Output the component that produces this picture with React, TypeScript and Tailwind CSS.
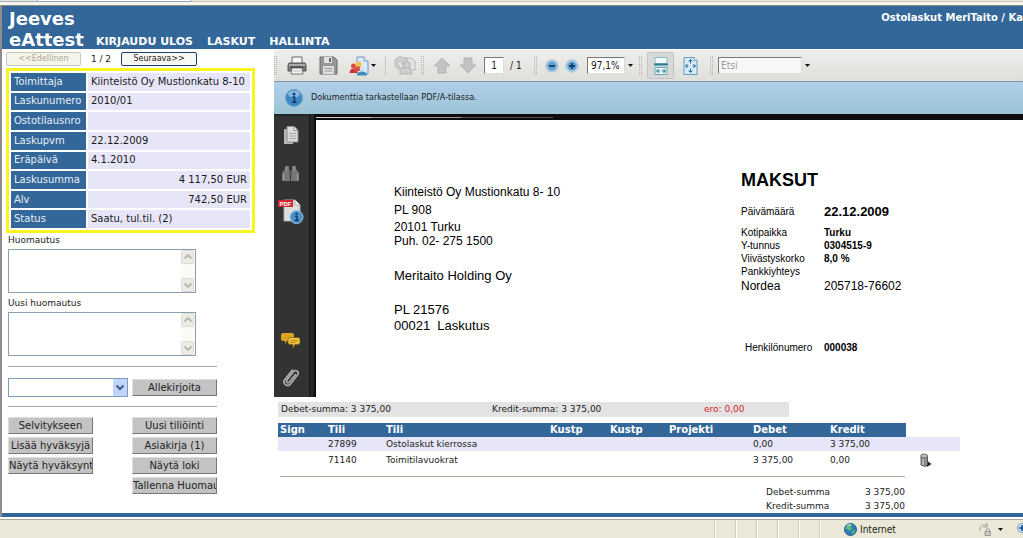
import type { ReactNode } from 'react'

interface InfoRow {
  label: string
  value: string
  right?: boolean
}

interface Posting {
  account: string
  name: string
  debet: string
  kredit: string
}

const info: InfoRow[] = [
  { label: 'Toimittaja', value: 'Kiinteistö Oy Mustionkatu 8-10' },
  { label: 'Laskunumero', value: '2010/01' },
  { label: 'Ostotilausnro', value: '' },
  { label: 'Laskupvm', value: '22.12.2009' },
  { label: 'Eräpäivä', value: '4.1.2010' },
  { label: 'Laskusumma', value: '4 117,50 EUR', right: true },
  { label: 'Alv', value: '742,50 EUR', right: true },
  { label: 'Status', value: 'Saatu, tul.til. (2)' },
]

const postings: Posting[] = [
  { account: '27899', name: 'Ostolaskut kierrossa', debet: '0,00', kredit: '3 375,00' },
  { account: '71140', name: 'Toimitilavuokrat', debet: '3 375,00', kredit: '0,00' },
]

const columns = ['Sign', 'Tili', 'Tili', 'Kustp', 'Kustp', 'Projekti', 'Debet', 'Kredit']

function GreyButton({ children }: { children: ReactNode }) {
  return (
    <button className="h-[17px] w-[85px] overflow-hidden whitespace-nowrap border border-t-[#dedede] border-l-[#dedede] border-r-[#777] border-b-[#777] bg-[#c3c3c3] text-[10px] leading-[14px] text-[#222]">
      {children}
    </button>
  )
}

function NoteField({ id, label }: { id: string; label: string }) {
  return (
    <div>
      <label htmlFor={id} className="block h-4 text-[9px] leading-[14px]">{label}</label>
      <div className="relative h-11 w-[188px]">
        <textarea id={id} className="block h-full w-full resize-none overflow-hidden border border-[#8a9fb5] bg-white p-1 text-[10px]" />
        <div className="absolute top-px right-px bottom-px flex w-[14px] flex-col justify-between bg-[#fbfaf5]">
          <ScrollArrow up />
          <ScrollArrow />
        </div>
      </div>
    </div>
  )
}

function ScrollArrow({ up = false }: { up?: boolean }) {
  return (
    <svg width="14" height="14" viewBox="0 0 14 14">
      <rect x="0.5" y="0.5" width="12" height="13" rx="1" fill="#ecebe4" stroke="#dddcd3" />
      <path d={up ? 'M3.5 8.5 7 5l3.5 3.5' : 'M3.5 5.5 7 9l3.5-3.5'} fill="none" stroke="#b8b7ad" strokeWidth="1.8" />
    </svg>
  )
}

function Caret() {
  return (
    <svg width="5" height="3" viewBox="0 0 5 3">
      <path d="M0 0h5L2.5 3z" fill="#111" />
    </svg>
  )
}

function Grip() {
  return (
    <div className="flex w-3 shrink-0 justify-center">
      <svg width="4" height="20" viewBox="0 0 4 20">
        <path d="M0.5 0v20M2.5 0v20" stroke="#b2b2b2" strokeDasharray="1 1" />
      </svg>
    </div>
  )
}

function PrinterIcon() {
  return (
    <svg width="20" height="20" viewBox="0 0 20 20">
      <path d="M5 1h10v7H5z" fill="#f7f7f7" stroke="#666" />
      <path d="M2 7h16l1 2v6H1V9z" fill="#777" stroke="#555" />
      <path d="M2 9h16" stroke="#bbb" strokeWidth="1.5" />
      <path d="M4 11.5h12" stroke="#333" strokeWidth="2" />
      <path d="M5 12h10l1 6H4z" fill="#f4f4f4" stroke="#777" />
      <path d="M6 15h8" stroke="#bbb" />
    </svg>
  )
}

function SaveIcon() {
  return (
    <svg width="19" height="19" viewBox="0 0 19 19">
      <path d="M1 1h14l3 3v14H1z" fill="#969696" stroke="#6c6c6c" />
      <path d="M5 1h8v6H5z" fill="#e3e3e3" />
      <path d="M10 2h2v4h-2z" fill="#666" />
      <path d="M4 10h11v8H4z" fill="#dedede" />
      <path d="M5.5 12.5h8M5.5 15h8" stroke="#999" />
    </svg>
  )
}

function ShareIcon() {
  return (
    <svg width="20" height="20" viewBox="0 0 20 20">
      <path d="M8 1h7l4 4v13H8z" fill="#dceafa" stroke="#6f97c6" />
      <path d="M15 1v4h4" fill="#fff" stroke="#6f97c6" />
      <circle cx="4.5" cy="10" r="2.5" fill="#d84a3e" />
      <path d="M0.5 17c0-6 8-6 8 0z" fill="#c33b33" />
      <circle cx="9.5" cy="8.5" r="3" fill="#f1c04d" />
      <path d="M5 15c0-6 9-6 9 0z" fill="#dc4a42" />
      <circle cx="13" cy="13" r="2.4" fill="#cfe3ee" />
      <path d="M8 19.500c0-5.500 10-5.500 10 0z" fill="#3c8fb5" />
    </svg>
  )
}

function CollaborateIcon() {
  return (
    <svg width="23" height="21" viewBox="0 0 23 21" fill="#cfcfcf" stroke="#b5b5b5">
      <path d="M10 3h8l4 3v9H10z" fill="#e4e4e4" />
      <path d="M2 7c0-5 7-7 10-3l2-1v6H8l2-2c-2-2-5-1-5 2 0 1 1 2 2 2l-2 3c-2-1-3-4-3-7z" />
      <circle cx="14" cy="10" r="3.500" />
      <path d="M7 19v-6h10l2 6z" />
    </svg>
  )
}

function PageArrow({ down = false }: { down?: boolean }) {
  return (
    <svg width="18" height="17" viewBox="0 0 18 17">
      <path
        d={down ? 'M9 16 1 8h4V1h8v7h4z' : 'M9 1l8 8h-4v7H5V9H1z'}
        fill="#c3c3c3"
        stroke="#b3b3b3"
      />
    </svg>
  )
}

function ZoomIcon({ plus = false }: { plus?: boolean }) {
  return (
    <svg width="14" height="14" viewBox="0 0 14 14">
      <circle cx="7" cy="7" r="6.200" fill="#a9cdea" stroke="#b4c6d6" />
      <circle cx="7" cy="7" r="4.600" fill="#62a3d6" />
      <path d={plus ? 'M4 7h6M7 4v6' : 'M4 7h6'} stroke="#173f6b" strokeWidth="1.800" />
    </svg>
  )
}

function FitWidthIcon() {
  return (
    <svg width="14" height="18" viewBox="0 0 14 18">
      <path d="M1 0.500h12v6H1z" fill="#f2fafb" stroke="#8cb9c4" />
      <path d="M0 7.500h14" stroke="#287f98" strokeWidth="2" />
      <path d="M1 10.500h12v7H1z" fill="#e5f4f8" stroke="#6ba7b8" />
      <path d="M3 14h3M8 14h3M4.500 12 2.500 14l2 2M9.500 12l2 2-2 2" fill="none" stroke="#1f6d88" />
    </svg>
  )
}

function FitPageIcon() {
  return (
    <svg width="15" height="18" viewBox="0 0 15 18">
      <path d="M1 0.500h10l3 3v14H1z" fill="#d8ecf7" stroke="#5e9cc4" />
      <path d="M11 0.500v3h3" fill="#fff" stroke="#5e9cc4" />
      <path
        d="M7.500 2.500v4M5.500 4.500l2-2 2 2M7.500 11.500v4M5.500 13.500l2 2 2-2M2.500 9h3M4.500 7l-2 2 2 2M9.500 9h3M10.500 7l2 2-2 2"
        fill="none"
        stroke="#236b97"
      />
    </svg>
  )
}

function InfoIcon() {
  return (
    <svg width="18" height="18" viewBox="0 0 18 18">
      <circle cx="9" cy="9" r="8.500" fill="#3c86c4" stroke="#6fa3cd" />
      <ellipse cx="9" cy="5" rx="6" ry="3.500" fill="#84b9e3" />
      <circle cx="9" cy="5.200" r="1.400" fill="#12365f" />
      <path d="M7.500 8H9.500v5M7 13.300h4.500" fill="none" stroke="#12365f" strokeWidth="1.600" />
    </svg>
  )
}

function PagesIcon() {
  return (
    <svg width="16" height="19" viewBox="0 0 16 19">
      <path d="M1 3h9v15H1z" fill="#b8b8b8" />
      <path d="M4 0.500h7l4 4V16H4z" fill="#dadada" stroke="#8c8c8c" />
      <path d="M11 0.500v4h4" fill="#f2f2f2" stroke="#8c8c8c" />
      <path d="M6 7.500h7M6 10h7M6 12.500h7" stroke="#aaa" />
    </svg>
  )
}

function BinocularsIcon() {
  return (
    <svg width="19" height="17" viewBox="0 0 19 17" fill="#777">
      <path d="M4 1h4v3l1 2v10H1V8l3-4zM11 1h4v3l3 4v8h-8V6l1-2z" />
      <path d="M8 6h3v4H8z" fill="#5c5c5c" />
      <path d="M2.500 9v6M16.500 9v6M5.500 2v4M13.500 2v4" stroke="#a0a0a0" />
    </svg>
  )
}

function PdfInfoIcon() {
  return (
    <svg width="26" height="26" viewBox="0 0 26 26">
      <path d="M6 2h11l5 5v16H6z" fill="#dedede" stroke="#aaa" />
      <path d="M17 2v5h5" fill="#fff" stroke="#aaa" />
      <path d="M0 2h15v7H0z" fill="#d3262c" />
      <text x="1.500" y="8" fontSize="6" fontWeight="bold" fill="#fff" fontFamily="Liberation Sans">PDF</text>
      <circle cx="18.500" cy="19" r="6.500" fill="#4a92ca" stroke="#9bc4e3" />
      <circle cx="18.500" cy="16" r="1.200" fill="#123c69" />
      <path d="M17 18.500h2v4M16.500 22.500h4.500" fill="none" stroke="#123c69" strokeWidth="1.500" />
    </svg>
  )
}

function CommentsIcon() {
  return (
    <svg width="20" height="17" viewBox="0 0 20 17">
      <path d="M2 1h9q2 0 2 2v4q0 2-2 2H6l-2 3V9H2Q0 9 0 7V3q0-2 2-2z" fill="#d9a520" />
      <path d="M9 5.500h8q2 0 2 2v3q0 2-2 2h-3l-2 3.500v-3.500H9q-2 0-2-2v-3q0-2 2-2z" fill="#edc23d" stroke="#7a5c12" strokeWidth="0.700" />
      <path d="M9.500 8.500h7M9.500 10.500h5" stroke="#b58614" />
    </svg>
  )
}

function ClipIcon() {
  return (
    <svg width="18" height="20" viewBox="0 0 18 20" fill="none" stroke="#b5b5b5" strokeWidth="1.500" strokeLinecap="round">
      <path d="M13.500 7.500 7.500 15c-1.500 1.800-4-.2-2.600-2L11.500 4.500c2.200-2.600 6.300.5 4.200 3.300L8.500 17c-3 3.700-8.600-.4-5.700-4.500L10.500 3" />
    </svg>
  )
}

function BinIcon() {
  return (
    <svg width="12" height="14" viewBox="0 0 12 14">
      <path d="M6 7l5.500 4-4.500 3z" fill="#222" />
      <path d="M1 3.500h6.500V12L5 13.500 1 12z" fill="#8d8d8d" stroke="#444" strokeWidth="0.800" />
      <ellipse cx="4.200" cy="3" rx="3.500" ry="2" fill="#bcbcbc" stroke="#555" strokeWidth="0.800" />
      <path d="M3 5.500v6.500" stroke="#ddd" />
    </svg>
  )
}

function GlobeIcon() {
  return (
    <svg width="13" height="13" viewBox="0 0 13 13">
      <circle cx="6.500" cy="6.500" r="6" fill="#2f7fb5" stroke="#2a5f86" />
      <path d="M3 2.500q3-2 5-.5L6.500 4 8 6 5 8 3.500 6 1.500 6zM8 8l3-1q0 3-3 4z" fill="#62b97a" />
      <path d="M3 3q2-2 4-1" fill="none" stroke="#d9f0f7" />
    </svg>
  )
}

function LockPageIcon() {
  return (
    <svg width="14" height="13" viewBox="0 0 14 13" fill="none" stroke="#999">
      <path d="M2 8C1 2 7 0 9 3M9 0v4H5" />
      <path d="M7 8.500h5.500v4H7z" fill="#c9c9c9" />
      <path d="M8 8V6.500q1.700-2 3.500 0V8" />
    </svg>
  )
}

function Header() {
  return (
    <header className="flex h-[43px] items-start justify-between overflow-hidden bg-[#336699] font-bold text-white">
      <div className="flex items-end pl-[7px]">
        <h1 className="w-[87px] pt-0.5 text-[18px] leading-[21px]">
          Jeeves<br />eAttest
        </h1>
        <nav className="flex gap-[14px] text-[11px] leading-[17px]">
          <a href="#ulos">KIRJAUDU ULOS</a>
          <a href="#laskut">LASKUT</a>
          <a href="#hallinta">HALLINTA</a>
        </nav>
      </div>
      <div className="whitespace-nowrap pt-[5px] text-[10px] leading-[14px]">Ostolaskut MeriTaito / Ka</div>
    </header>
  )
}

function InvoicePanel() {
  return (
    <aside className="pt-[3px] pl-1">
      <div className="flex items-center text-[8px] leading-3">
        <button disabled className="h-[14px] w-[75px] rounded-xs border border-[#c9c7ba] bg-[#f5f4ea] leading-3 text-[#a9a798]">&lt;&lt;Edellinen</button>
        <span className="w-10 text-center text-[9px]">1 / 2</span>
        <button className="h-[14px] w-[76px] rounded-xs border border-[#1c3f6e] bg-[#f8f8f5] leading-3">Seuraava&gt;&gt;</button>
      </div>

      <table className="mt-0.5 h-[165px] w-[249px] border-separate border-spacing-0.5 border-[3px] border-[#f9f321] text-[10px] leading-[14px]">
        <tbody>
          {info.map((row) => (
            <tr key={row.label}>
              <th className="w-[75px] bg-[#336699] px-[3px] py-0 text-left font-normal text-[#e8f0f8]">{row.label}</th>
              <td className={row.right ? 'bg-[#e6e6f8] px-[3px] py-0 text-right' : 'bg-[#e6e6f8] px-[3px] py-0'}>{row.value}</td>
            </tr>
          ))}
        </tbody>
      </table>

      <div className="flex w-[211px] flex-col pl-0.5">
        <div className="flex flex-col gap-[3px]">
          <NoteField id="huomautus" label="Huomautus" />
          <NoteField id="uusi" label="Uusi huomautus" />
        </div>

        <hr className="mt-[10px] border-[#a5a195]" />

        <div className="mt-[11px] flex items-center justify-between">
          <div className="relative">
            <select aria-label="Hyväksyjä" className="block h-[19px] w-[120px] appearance-none border border-[#7f9db9] bg-white text-[10px]" />
            <svg className="pointer-events-none absolute top-px right-px" width="14" height="17" viewBox="0 0 14 17">
              <rect width="14" height="17" rx="1" fill="#c2d5fc" />
              <path d="M3.500 6.500 7 10l3.500-3.500" fill="none" stroke="#3d5a8c" strokeWidth="2" />
            </svg>
          </div>
          <GreyButton>Allekirjoita</GreyButton>
        </div>

        <hr className="mt-[9px] border-[#a5a195]" />

        <div className="mt-[10px] flex justify-between pb-3">
          <div className="flex flex-col gap-[3px]">
            <GreyButton>Selvitykseen</GreyButton>
            <GreyButton>Lisää hyväksyjä</GreyButton>
            <GreyButton>Näytä hyväksynt</GreyButton>
          </div>
          <div className="flex flex-col gap-[3px]">
            <GreyButton>Uusi tiliöinti</GreyButton>
            <GreyButton>Asiakirja (1)</GreyButton>
            <GreyButton>Näytä loki</GreyButton>
            <GreyButton>Tallenna Huomau</GreyButton>
          </div>
        </div>
      </div>
    </aside>
  )
}

function PdfToolbar() {
  return (
    <div className="flex h-[33px] items-center border-t border-b border-t-white border-b-[#8b9299] bg-linear-to-b from-[#eeeeec] to-[#dfdedb] font-['DejaVu_Sans_Condensed','DejaVu_Sans',sans-serif] text-[10px]">
      <div className="-ml-1"><Grip /></div>
      <button aria-label="Tulosta" className="flex w-[30px] justify-center"><PrinterIcon /></button>
      <button aria-label="Tallenna" className="flex w-8 justify-center"><SaveIcon /></button>
      <button aria-label="Jaa" className="flex w-9 items-center justify-center gap-0.5"><ShareIcon /><Caret /></button>
      <div className="mx-[5px] h-5 w-px bg-[#c6c6c6]" />
      <button aria-label="Yhteistyö" className="flex w-[26px] justify-center"><CollaborateIcon /></button>
      <Grip />
      <button aria-label="Edellinen sivu" className="flex w-[26px] justify-center"><PageArrow /></button>
      <button aria-label="Seuraava sivu" className="flex w-[26px] justify-center"><PageArrow down /></button>
      <input aria-label="Sivu" defaultValue="1" className="ml-[3px] h-[17px] w-5 border border-[#777] border-r-[#ddd] border-b-[#ddd] bg-white text-center" />
      <span className="w-[26px] pl-1.5">/ 1</span>
      <Grip />
      <button aria-label="Loitonna" className="flex w-5 justify-center"><ZoomIcon /></button>
      <button aria-label="Lähennä" className="flex w-5 justify-center"><ZoomIcon plus /></button>
      <input aria-label="Zoomaus" defaultValue="97,1%" className="ml-[5px] h-[17px] w-[38px] border border-[#777] border-r-[#ddd] border-b-[#ddd] bg-white pl-[3px]" />
      <div className="flex w-[10px] justify-center"><Caret /></div>
      <Grip />
      <button aria-label="Sovita leveys" className="flex h-[27px] w-[27px] items-center justify-center rounded-xs border border-[#c3c3c3] bg-[#d8d8d8]"><FitWidthIcon /></button>
      <button aria-label="Sovita sivu" className="flex w-8 justify-center"><FitPageIcon /></button>
      <Grip />
      <input aria-label="Etsi" placeholder="Etsi" className="h-[17px] w-[84px] border border-[#777] border-r-[#ddd] border-b-[#ddd] bg-[#f8f8f8] pl-0.5 placeholder:text-[#999]" />
      <div className="flex w-[10px] justify-center"><Caret /></div>
    </div>
  )
}

function PdfPage() {
  return (
    <div className="flex min-w-0 flex-1 bg-white pt-[50px] pb-[43px] font-['Liberation_Sans',Arial,sans-serif] text-black">
      <div className="w-[425px] pt-[15px] pl-[78px] leading-[14px]">
        <div className="text-[12px] leading-[14px]">
          <p>Kiinteistö Oy Mustionkatu 8- 10</p>
          <p className="mt-1">PL 908</p>
          <p className="mt-[3px]">20101 Turku</p>
          <p>Puh. 02- 275 1500</p>
        </div>
        <div className="text-[13px] leading-[14px]">
          <p className="mt-[21px]">Meritaito Holding Oy</p>
          <p className="mt-5">PL 21576</p>
          <p className="mt-0.5 whitespace-pre">00021  Laskutus</p>
        </div>
      </div>
      <div className="text-[10px] leading-[13px]">
        <h2 className="text-[18px] leading-5 font-bold">MAKSUT</h2>
        <dl className="grid grid-cols-[83px_auto] items-center">
          <dt className="mt-[15px]">Päivämäärä</dt>
          <dd className="mt-[15px] text-[13px] leading-[13px] font-bold">22.12.2009</dd>
          <dt className="mt-2">Kotipaikka</dt>
          <dd className="mt-2 font-bold">Turku</dd>
          <dt>Y-tunnus</dt>
          <dd className="font-bold">0304515-9</dd>
          <dt>Viivästyskorko</dt>
          <dd className="font-bold">8,0 %</dd>
          <dt>Pankkiyhteys</dt>
          <dd />
          <dt className="mt-0.5 text-[12px] leading-[13px]">Nordea</dt>
          <dd className="mt-0.5 text-[12px] leading-[13px]">205718-76602</dd>
          <dt className="mt-12 pl-1">Henkilönumero</dt>
          <dd className="mt-12 font-bold">000038</dd>
        </dl>
      </div>
    </div>
  )
}

function PdfViewer() {
  return (
    <section>
      <PdfToolbar />
      <div className="flex h-8 items-center gap-2 bg-linear-to-b from-[#b1cfea] to-[#9bc4d4] pl-[11px] font-['DejaVu_Sans_Condensed','DejaVu_Sans',sans-serif] text-[9px]">
        <InfoIcon />
        <span>Dokumenttia tarkastellaan PDF/A-tilassa.</span>
      </div>
      <div className="flex bg-[#0d0d0f]">
        <div className="flex w-9 flex-col items-center border-t-2 border-r border-t-[#1f2529] border-r-[#161616] bg-[#333] pt-[10px] pr-0.5 pb-[10px]">
          <PagesIcon />
          <div className="mt-5"><BinocularsIcon /></div>
          <div className="mt-4"><PdfInfoIcon /></div>
          <div className="mt-auto"><CommentsIcon /></div>
          <div className="mt-[18px]"><ClipIcon /></div>
        </div>
        <div className="w-1 bg-[#262626]" />
        <div className="flex min-w-0 flex-1 flex-col pl-0.5">
          <svg className="block h-1.5 w-full" viewBox="0 0 707 6" preserveAspectRatio="none">
            <path d="M0 3.500h55" stroke="#d5d0c4" />
            <path d="M55 3.500h90" stroke="#999" />
            <path d="M145 3.500h92" stroke="#555" />
          </svg>
          <PdfPage />
        </div>
      </div>
    </section>
  )
}

function Postings() {
  return (
    <section className="pt-[5px] pl-1 text-[9px] leading-[14px] text-[#222]">
      <div className="grid h-[15px] w-[511px] grid-cols-[211px_212px_1fr] bg-[#e3e3e3] pl-[3px]">
        <span>Debet-summa: 3 375,00</span>
        <span>Kredit-summa: 3 375,00</span>
        <span className="text-[#d8232f]">ero: 0,00</span>
      </div>

      <table className="mt-1.5 w-[682px] table-fixed border-collapse text-left">
        <colgroup>
          <col className="w-12" />
          <col className="w-[58px]" />
          <col className="w-[164px]" />
          <col className="w-[60px]" />
          <col className="w-[59px]" />
          <col className="w-[84px]" />
          <col className="w-[77px]" />
          <col className="w-[78px]" />
          <col className="w-[54px]" />
        </colgroup>
        <thead>
          <tr className="text-[10px] leading-[14px] text-white">
            {columns.map((c, i) => (
              <th key={i} className="bg-[#336699] px-0.5 py-0 font-bold">{c}</th>
            ))}
            <td />
          </tr>
        </thead>
        <tbody>
          {postings.map((p, i) => (
            <tr key={p.account} className={i % 2 === 0 ? 'h-[14px] bg-[#e6e6f8]' : 'h-[18px]'}>
              <td />
              <td className="px-0.5 py-0">{p.account}</td>
              <td className="px-0.5 py-0">{p.name}</td>
              <td />
              <td />
              <td />
              <td className="px-0.5 py-0">{p.debet}</td>
              <td className="px-0.5 py-0">{p.kredit}</td>
              <td className="py-0 pl-[14px]">
                {i === 1 && <button aria-label="Poista" className="block"><BinIcon /></button>}
              </td>
            </tr>
          ))}
        </tbody>
      </table>

      <div className="w-[627px] pl-0.5">
        <hr className="mt-[7px] border-[#a8aca0]" />
        <dl className="mt-2 ml-auto grid w-[139px] grid-cols-[1fr_auto]">
          <dt>Debet-summa</dt>
          <dd>3 375,00</dd>
          <dt>Kredit-summa</dt>
          <dd>3 375,00</dd>
        </dl>
      </div>
    </section>
  )
}

function StatusBar() {
  return (
    <footer className="flex h-[19px] items-center justify-end overflow-hidden border-t border-[#a9a698] bg-[#ebe8d7] font-['DejaVu_Sans_Condensed','DejaVu_Sans',sans-serif] text-[10px]">
      <div className="flex h-full">
        {[0, 1, 2, 3, 4, 5].map((n) => (
          <div key={n} className="w-[21px] border-l border-[#cfccba] shadow-[inset_1px_0_0_#fff]" />
        ))}
      </div>
      <div className="flex w-[138px] items-center gap-[3px] pl-1">
        <GlobeIcon />
        <span>Internet</span>
      </div>
      <div className="flex h-full w-[38px] items-center gap-1.5">
        <LockPageIcon />
        <Caret />
      </div>
      <svg width="7" height="13" viewBox="0 0 7 13">
        <circle cx="6" cy="5" r="4.500" fill="#cfe3f5" stroke="#7aa3cf" />
        <path d="M3 5h4M6 2v6" stroke="#1d4f96" strokeWidth="1.600" />
      </svg>
    </footer>
  )
}

export default function App() {
  return (
    <div className="flex min-h-screen flex-col overflow-hidden bg-white font-['DejaVu_Sans',Verdana,sans-serif] text-[#1a1a1a]">
      <div className="flex h-1.5 border-b border-[#8c8c84] bg-[#f6f5ee]">
        <div className="h-0.5 w-[38px] border-r border-b border-[#a5abb0] bg-[#e4e6e8]" />
        <div className="h-0.5 w-[154px] rounded-br-xs border-r border-b border-[#8fa3b8] bg-white" />
        <div className="h-0.5 flex-1 border-b border-[#c9c6b6] bg-[#ece9d8]" />
      </div>
      <div className="flex flex-1 flex-col border-l-2 border-[#8f8b8f]">
        <Header />
        <main className="grid flex-1 grid-cols-[272px_minmax(0,1fr)]">
          <InvoicePanel />
          <div>
            <PdfViewer />
            <Postings />
          </div>
        </main>
        <div className="h-1 bg-[#336699]" />
      </div>
      <div className="h-0.5 bg-white" />
      <StatusBar />
    </div>
  )
}
